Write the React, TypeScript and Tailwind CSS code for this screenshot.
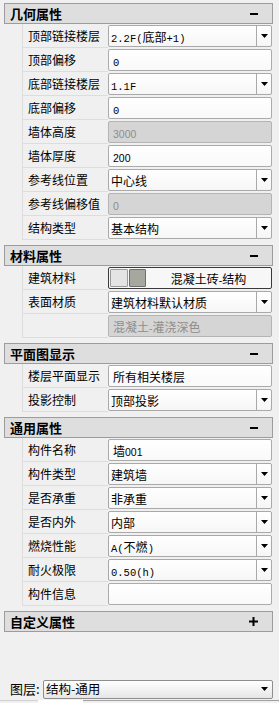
import React from 'react';

type Kind = 'text' | 'select' | 'disabled' | 'material';
type Row = { label: string; value: string; kind: Kind; mono?: boolean };
type Section = { title: string; open: boolean; rows: Row[] };

const sections: Section[] = [
  {
    title: '几何属性',
    open: true,
    rows: [
      { label: '顶部链接楼层', value: '2.2F(底部+1)', kind: 'select', mono: true },
      { label: '顶部偏移', value: '0', kind: 'text', mono: true },
      { label: '底部链接楼层', value: '1.1F', kind: 'select', mono: true },
      { label: '底部偏移', value: '0', kind: 'text', mono: true },
      { label: '墙体高度', value: '3000', kind: 'disabled' },
      { label: '墙体厚度', value: '200', kind: 'text' },
      { label: '参考线位置', value: '中心线', kind: 'select' },
      { label: '参考线偏移值', value: '0', kind: 'disabled' },
      { label: '结构类型', value: '基本结构', kind: 'select' },
    ],
  },
  {
    title: '材料属性',
    open: true,
    rows: [
      { label: '建筑材料', value: '混凝土砖-结构', kind: 'material' },
      { label: '表面材质', value: '建筑材料默认材质', kind: 'select' },
      { label: '', value: '混凝土-灌浇深色', kind: 'disabled' },
    ],
  },
  {
    title: '平面图显示',
    open: true,
    rows: [
      { label: '楼层平面显示', value: '所有相关楼层', kind: 'text' },
      { label: '投影控制', value: '顶部投影', kind: 'select' },
    ],
  },
  {
    title: '通用属性',
    open: true,
    rows: [
      { label: '构件名称', value: '墙001', kind: 'text' },
      { label: '构件类型', value: '建筑墙', kind: 'select' },
      { label: '是否承重', value: '非承重', kind: 'select' },
      { label: '是否内外', value: '内部', kind: 'select' },
      { label: '燃烧性能', value: 'A(不燃)', kind: 'select', mono: true },
      { label: '耐火极限', value: '0.50(h)', kind: 'select', mono: true },
      { label: '构件信息', value: '', kind: 'text' },
    ],
  },
  { title: '自定义属性', open: false, rows: [] },
];

function MixedText({ text, mono }: { text: string; mono?: boolean }) {
  const parts = text.match(/[\x00-\x7F]+|[^\x00-\x7F]+/g) || [];
  return (
    <span className="whitespace-nowrap">
      {parts.map((p, i) =>
        /^[\x00-\x7F]+$/.test(p) ? (
          mono ? (
            <span key={i} className="font-['Liberation_Mono',monospace] text-[10.5px]">
              {p}
            </span>
          ) : (
            <span key={i} className="font-['Liberation_Sans',sans-serif] text-[10.5px]">
              {p}
            </span>
          )
        ) : (
          <span key={i} className="font-['Noto_Sans_CJK_SC',sans-serif] text-[12px]">
            {p}
          </span>
        )
      )}
    </span>
  );
}

function Arrow() {
  return (
    <svg width="7" height="4" viewBox="0 0 7 4">
      <polygon points="0,0 7,0 3.5,4" fill="#000" />
    </svg>
  );
}

function Value({ row }: { row: Row }) {
  if (row.kind === 'select') {
    return (
      <div className="flex h-[22px] w-full items-stretch rounded-[2px] border border-[#a9a9a9] bg-gradient-to-b from-white to-[#f6f6f6]">
        <div className="flex flex-1 items-center pl-[2px] text-black">
          <MixedText text={row.value} mono={row.mono} />
        </div>
        <div className="flex w-[15px] items-center justify-center border-l border-[#a9a9a9]">
          <Arrow />
        </div>
      </div>
    );
  }
  if (row.kind === 'disabled') {
    return (
      <div className="flex h-[22px] w-full items-center rounded-[2px] border border-[#b4b4b4] bg-[#d5d5d5] pl-[4px] text-[#8d8d8d]">
        <MixedText text={row.value} />
      </div>
    );
  }
  if (row.kind === 'material') {
    return (
      <div className="flex h-[22px] w-full items-center rounded-[2px] border border-[#3a3a3a] bg-[#f7f7f7] pl-[1px]">
        <div className="h-[18px] w-[18px] rounded-[1px] border border-[#9a9a9a] bg-[#e4e4e4]" />
        <div className="ml-[1px] h-[18px] w-[17px] rounded-[1px] border border-[#6e6e6e] bg-[#a6a79e]" />
        <div className="flex flex-1 justify-center text-black">
          <MixedText text={row.value} />
        </div>
      </div>
    );
  }
  return (
    <div className="flex h-[22px] w-full items-center rounded-[2px] border border-[#ababab] bg-gradient-to-b from-white to-[#f9f9f9] pl-[4px] text-black">
      <MixedText text={row.value} mono={row.mono} />
    </div>
  );
}

function SectionView({ s }: { s: Section }) {
  return (
    <div className="flex flex-col">
      <div className="flex h-[21px] items-center justify-between border border-[#9c9c9c] bg-[#dedede] pl-[5px] pr-[14px]">
        <span className="font-['Noto_Sans_CJK_SC',sans-serif] text-[13px] font-bold leading-none text-black">
          {s.title}
        </span>
        {s.open ? (
          <div className="h-[2px] w-[8px] bg-black" />
        ) : (
          <svg width="9" height="9" viewBox="0 0 9 9">
            <rect x="0" y="3.5" width="9" height="2" fill="#000" />
            <rect x="3.5" y="0" width="2" height="9" fill="#000" />
          </svg>
        )}
      </div>
      {s.rows.map((r, i) => (
        <div key={i} className="flex h-[24px]">
          <div className="w-[18px]" />
          <div className="flex w-[86px] items-center border-b border-l border-[#dddddd] pl-[5px]">
            <span className="font-['Noto_Sans_CJK_SC',sans-serif] text-[12px] text-black whitespace-nowrap">
              {r.label}
            </span>
          </div>
          <div className="flex flex-1 items-center pr-[1px]">
            <Value row={r} />
          </div>
        </div>
      ))}
    </div>
  );
}

export default function App() {
  return (
    <div className="flex h-[703px] w-[279px] flex-col overflow-hidden bg-[#f0f0f0]">
      <div className="flex flex-col gap-[5px] pl-[4px] pr-[6px] pt-[3px]">
        {sections.map((s, i) => (
          <SectionView key={i} s={s} />
        ))}
      </div>
      <div className="mt-auto flex h-[20px] items-center pl-[10px] pr-[6px]">
        <span className="w-[33px] font-['Noto_Sans_CJK_SC',sans-serif] text-[13px] text-black">
          图层:
        </span>
        <div className="flex h-[19px] flex-1 items-center rounded-[2px] border border-[#8e8e8e] bg-gradient-to-b from-white to-[#e6e6e6] pl-[2px] pr-[4px]">
          <span className="flex-1 font-['Noto_Sans_CJK_SC',sans-serif] text-[12.5px] text-black">
            结构-通用
          </span>
          <Arrow />
        </div>
      </div>
      <div className="mt-[1px] flex h-[3px]">
        <div className="w-[38px] border-t border-[#d0d0d0]" />
        <div className="w-[45px] bg-white" />
        <div className="flex-1 border-t border-[#a0a0a0]" />
      </div>
    </div>
  );
}
